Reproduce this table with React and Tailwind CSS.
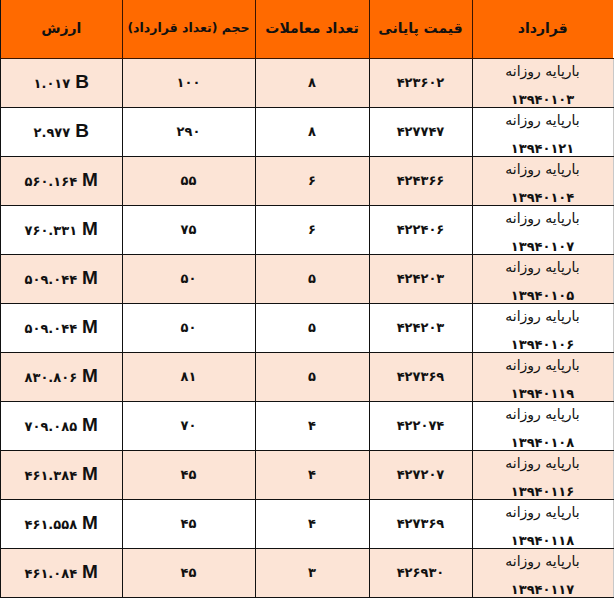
const rows = [
  ["۱.۰۱۷", "B", "۱۰۰", "۸", "۴۲۳۶۰۲", "۱۳۹۴۰۱۰۳"],
  ["۲.۹۷۷", "B", "۲۹۰", "۸", "۴۲۷۷۴۷", "۱۳۹۴۰۱۲۱"],
  ["۵۶۰.۱۶۴", "M", "۵۵", "۶", "۴۲۴۳۶۶", "۱۳۹۴۰۱۰۴"],
  ["۷۶۰.۳۳۱", "M", "۷۵", "۶", "۴۲۲۴۰۶", "۱۳۹۴۰۱۰۷"],
  ["۵۰۹.۰۴۴", "M", "۵۰", "۵", "۴۲۴۲۰۳", "۱۳۹۴۰۱۰۵"],
  ["۵۰۹.۰۴۴", "M", "۵۰", "۵", "۴۲۴۲۰۳", "۱۳۹۴۰۱۰۶"],
  ["۸۳۰.۸۰۶", "M", "۸۱", "۵", "۴۲۷۳۶۹", "۱۳۹۴۰۱۱۹"],
  ["۷۰۹.۰۸۵", "M", "۷۰", "۴", "۴۲۲۰۷۴", "۱۳۹۴۰۱۰۸"],
  ["۴۶۱.۳۸۴", "M", "۴۵", "۴", "۴۲۷۲۰۷", "۱۳۹۴۰۱۱۶"],
  ["۴۶۱.۵۵۸", "M", "۴۵", "۴", "۴۲۷۳۶۹", "۱۳۹۴۰۱۱۸"],
  ["۴۶۱.۰۸۴", "M", "۴۵", "۳", "۴۲۶۹۳۰", "۱۳۹۴۰۱۱۷"],
]

export default function App() {
  return (
    <div className="w-[615px] h-[598px] bg-white overflow-hidden font-['DejaVu_Sans',sans-serif] text-[#111]">
      <div className="w-[613px] border-l border-[#111]">
        <table dir="rtl" className="w-[612px] table-fixed border-collapse">
          <colgroup>
            <col className="w-[141px]" />
            <col className="w-[103px]" />
            <col className="w-[114px]" />
            <col className="w-[133px]" />
            <col className="w-[121px]" />
          </colgroup>
          <thead>
            <tr className="h-[58px] bg-[#ff6a00] text-[14px] font-bold whitespace-nowrap">
              <th className="border-b border-l border-[#3a1500]">قرارداد</th>
              <th className="border-b border-l border-[#3a1500]">قیمت پایانی</th>
              <th className="border-b border-l border-[#3a1500] tracking-tight">تعداد معاملات</th>
              <th className="border-b border-l border-[#3a1500] text-[12.5px] tracking-tighter">حجم (تعداد قرارداد)</th>
              <th className="border-b border-[#3a1500]">ارزش</th>
            </tr>
          </thead>
          <tbody>
            {rows.map((r, i) => (
              <tr key={i} className={`h-[49px] text-[13px] font-bold ${i % 2 === 0 ? "bg-[#fce4d6]" : "bg-white"}`}>
                <td className="border-b border-l border-r border-r-[#c8c8c8] border-[#111] p-0 align-top">
                  <div className="flex flex-col items-center h-[48px] font-normal text-[14px]">
                    <span className="leading-[20px] mt-[2px]">بارپایه روزانه</span>
                    <span className="leading-[20px] mt-auto mb-[-3px] font-bold text-[13px]">{r[5]}</span>
                  </div>
                </td>
                <td className="border-b border-l border-[#111] text-center">{r[4]}</td>
                <td className="border-b border-l border-[#111] text-center">{r[3]}</td>
                <td className="border-b border-l border-[#111] text-center">{r[2]}</td>
                <td className="border-b border-[#111] text-center">
                  <span dir="ltr" className="inline-flex items-baseline gap-[5px]">
                    <span>{r[0]}</span>
                    <span className="font-['Liberation_Sans',sans-serif] text-[19px]">{r[1]}</span>
                  </span>
                </td>
              </tr>
            ))}
          </tbody>
        </table>
      </div>
    </div>
  )
}
